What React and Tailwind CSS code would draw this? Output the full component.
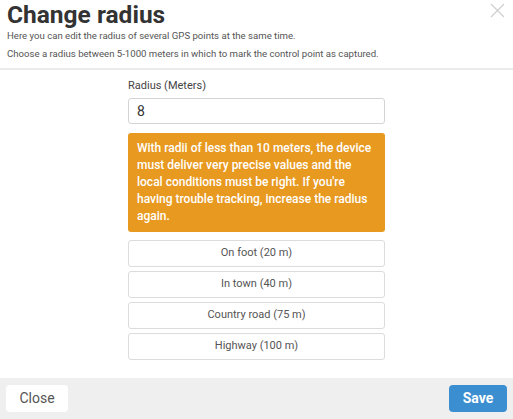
const presets = ['On foot (20 m)', 'In town (40 m)', 'Country road (75 m)', 'Highway (100 m)']

export default function App() {
  return (
    <div className="w-[513px] h-[419px] bg-white flex flex-col overflow-hidden" style={{ fontFamily: 'Roboto, "Liberation Sans", sans-serif' }}>
      {/* header */}
      <div className="relative h-[70px] px-[7px] border-b-2 border-[#ebebeb] shrink-0">
        <h1 className="text-[24.5px] leading-[28px] font-bold text-[#333] pt-[1px]">Change radius</h1>
        <p className="text-[9.6px] leading-[18px] text-[#555] -mt-[2px]">
          Here you can edit the radius of several GPS points at the same time.
        </p>
        <p className="text-[9.6px] leading-[18px] text-[#555]">
          Choose a radius between 5-1000 meters in which to mark the control point as captured.
        </p>
        <button className="absolute right-[8px] top-[3px] w-[15px] h-[15px]">
          <svg viewBox="0 0 15 15" className="w-[15px] h-[15px]" stroke="#cfcfcf" strokeWidth="1.2" fill="none">
            <path d="M1 1L14 14M14 1L1 14" />
          </svg>
        </button>
      </div>

      {/* body */}
      <div className="flex-1">
        <div className="w-[257px] mx-auto pt-[9px]">
          <label className="block text-[11px] leading-[14px] text-[#444] mb-[5px]">Radius (Meters)</label>
          <input
            defaultValue="8"
            className="w-full h-[26px] border border-[#d4d4d4] rounded-[3px] px-[8px] text-[14px] text-[#333] outline-none"
          />
          <div className="mt-[9px] bg-[#e8991f] rounded-[3px] pl-[9px] pr-[6px] pt-[7px] pb-[7px] text-white text-[12px] leading-[17px] font-medium">
            With radii of less than 10 meters, the device must deliver very precise values and the local conditions must be right. If you're having trouble tracking, increase the radius again.
          </div>
          <div className="mt-[8px] flex flex-col gap-[4px]">
            {presets.map((p) => (
              <button
                key={p}
                className="h-[27px] w-full border border-[#dcdcdc] rounded-[3px] bg-white text-[11px] text-[#555]"
              >
                {p}
              </button>
            ))}
          </div>
        </div>
      </div>

      {/* footer */}
      <div className="h-[41px] bg-[#efefef] flex items-center justify-between px-[6px] shrink-0">
        <button className="h-[27px] w-[62px] bg-white rounded-[4px] text-[14px] text-[#555]">Close</button>
        <button className="h-[27px] w-[58px] bg-[#3b8fd0] rounded-[4px] text-[14px] font-bold text-white">Save</button>
      </div>
    </div>
  )
}
